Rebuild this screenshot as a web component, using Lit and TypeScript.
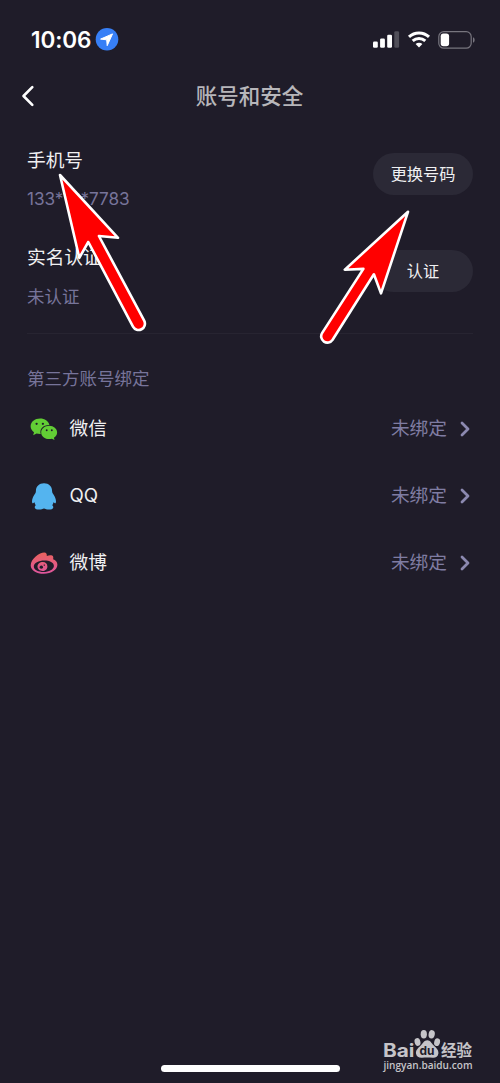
import { LitElement, html, svg, css } from "lit";
import { customElement } from "lit/decorators.js";

const wechat = svg`
  <path fill="#62cd35" d="M10.100 .6C4.900 .6 .6 4 .6 8.300c0 2.400 1.300 4.500 3.400 5.900L3.200 17.200l3.300-1.700c1.200.3 2.400.5 3.600.5h.6C9.300 11 13 6.900 19.400 7 18.500 3.300 14.700 .6 10.100 .6z"/>
  <path fill="#62cd35" d="M19.300 7.700c-4.500 0-8.100 2.900-8.100 6.700s3.600 6.700 8.100 6.700c.9 0 1.800-.1 2.600-.4l2.600 1.300-.6-2.300c1.900-1.200 3.200-3 3.200-5.300 0-3.700-3.500-6.700-7.800-6.700z"/>
  <g fill="#1f1c29"><circle cx="6.600" cy="5.800" r="1.150"/><circle cx="12.900" cy="5.800" r="1.150"/><circle cx="16.700" cy="12.300" r=".95"/><circle cx="21.800" cy="12.300" r=".95"/></g>`;
const qq = svg`
  <path fill="#54b4ef" d="M14 .3C9.100.3 6 3.500 5.900 8c0 .8-.1 1.400-.4 2C3.700 12.400 2 15.600 2 18.200c0 1.500.4 2.300 1.100 2 .5-.2.900-.5 1.400-.9.200 1.100.6 2.100 1.200 3-.7.5-1 1.200-1 2 0 1.600 1.700 2.300 4.300 2.300 2.200 0 3.800-.5 5-1 1.200.5 2.800 1 5 1 2.600 0 4.300-.7 4.300-2.300 0-.8-.3-1.500-1-2 .6-.9 1-1.900 1.200-3 .5.4.9.7 1.400.9.700.3 1.100-.5 1.100-2 0-2.600-1.700-5.800-3.500-8.200-.3-.6-.4-1.200-.4-2C22 3.500 18.900.3 14 .3z"/>`;
const weibo = svg`
  <defs><linearGradient id="wb" gradientUnits="userSpaceOnUse" x1="0" y1="1" x2="0" y2="22"><stop offset="0" stop-color="#e9625e"/><stop offset="1" stop-color="#df559f"/></linearGradient></defs>
  <path fill="url(#wb)" fill-rule="evenodd" d="M14.300 .5C9.500 .6 .7 6.700 .7 13.400c0 4.900 6 8.300 13 8.300 7.600 0 13.700-4.100 13.700-9 0-2.700-1.900-4.500-4.300-5.400.5-1.500.2-3.100-1-3.700-1.500-.8-3.400-.4-5.300.3.200-1.900-.6-3.400-2.500-3.400zM14.300 8.500c-5.600 0-10.500 2.500-10.500 5.900s4.500 5.500 9.800 5.500 10.300-2.600 10.300-6-4.300-5.400-9.600-5.400z"/>
  <path fill="url(#wb)" fill-rule="evenodd" d="M12.900 10c-3 0-5.400 2.100-5.400 4.600s2.200 4.400 5 4.400 4.900-1.900 4.900-4.600S15.500 10 12.900 10zM11.300 13.600a1.800 1.600 0 1 0 .01 0zM14.300 12.500a.7.600 0 1 0 .01 0z"/>`;

@customElement("app-root")
export class AppRoot extends LitElement {
  static styles = css`
    :host {
      display: block; position: relative; height: 1083px; overflow: hidden;
      background: #1f1c29; color: #f0f0f2;
      font-family: Inter, "Noto Sans CJK SC", sans-serif;
      font-size: 18.700px; line-height: 28px;
    }
    svg { display: block; flex: none; overflow: visible; }
    .status { display: flex; align-items: center; height: 79px; padding: 0 25px 0 31px; }
    .time { font-size: 22.500px; font-weight: 600; color: #fff; width: 65px; white-space: nowrap; letter-spacing: -.1px; }
    .grow { flex: 1; }
    .signal { margin-right: 9px; }
    .wifi { margin-right: 8px; }
    .nav { display: grid; grid-template-columns: 60px 1fr 61px; align-items: center; height: 34px; }
    .back { margin-left: 21px; }
    .title { text-align: center; font-size: 21.500px; font-weight: 500; color: #b7b6ba; }
    .account { display: flex; justify-content: space-between; align-items: center; height: 97px; padding: 0 27px; }
    .accounts { padding-top: 19px; height: 220px; box-sizing: border-box; }
    .info { display: flex; flex-direction: column; gap: 11px; }
    .info, .btn { margin-top: -1px; }
    .sub { font-size: 17.500px; color: #77749a; }
    .num { font-size: 17.200px; letter-spacing: -.05px; margin-top: -1px; padding-bottom: 1px; }
    .btn { width: 100px; height: 42.500px; border: 0; border-radius: 22px; background: #2b2936; color: #f0f0f2;
      font: 400 16.200px/42px Inter, "Noto Sans CJK SC", sans-serif; padding: 0; margin-bottom: 12px; }
    .line { height: 1px; margin: 0 27px; background: #272431; }
    .heading { padding: 31px 27px 3px; font-size: 17.500px; color: #77749a; }
    .item { display: flex; align-items: center; height: 66.800px; padding: 0 29px 0 30px; }
    .icon { width: 28px; margin-right: 11.500px; }
    .name { flex: 1; }
    .state { color: #7f7ca2; margin-right: 12px; }
    .home { position: absolute; left: 161px; bottom: 11px; width: 179px; height: 7px; border-radius: 4px; background: #fff; }
    .overlay { position: absolute; left: 0; top: 0; pointer-events: none; }
    .brand { font-family: Inter, sans-serif; font-weight: 700; }
    .cn { font-family: "Noto Sans CJK SC", sans-serif; font-weight: 700; }
    .url { font-family: "Open Sans", sans-serif; font-weight: 600; }
  `;

  private item(icon: unknown, height: number, name: string) {
    return html`<div class="item">
      <svg class="icon" width="28" height=${height} viewBox="0 0 28 ${height}">${icon}</svg>
      <span class="name">${name}</span><span class="state">未绑定</span>
      <svg width="12" height="16" viewBox="0 0 12 16"><path d="M3 2 9 8 3 14" fill="none" stroke="#8c89b0" stroke-width="2.800" stroke-linecap="round" stroke-linejoin="round"/></svg>
    </div>`;
  }

  render() {
    return html`
      <div class="status">
        <span class="time">10:06</span>
        <svg width="23" height="23" viewBox="0 0 23 23"><circle cx="11" cy="11.300" r="11.300" fill="#377ff6"/><path d="M16.500 5.900 4.600 11.100l6.100.7.500 5.900z" fill="#fff" stroke="#fff" stroke-linejoin="round" stroke-width="1"/></svg>
        <span class="grow"></span>
        <svg class="signal" width="26" height="17" viewBox="0 0 26 17"><g fill="#fff"><rect y="10.500" width="4.800" height="6.300" rx="1.300"/><rect x="7.100" y="7.500" width="4.800" height="9.300" rx="1.300"/><rect x="14.200" y="3.800" width="4.800" height="13" rx="1.300"/></g><rect x="21.300" y=".3" width="4.800" height="16.500" rx="1.300" fill="#514f59"/></svg>
        <svg class="wifi" width="22" height="17" viewBox="0 0 22 17"><g fill="none" stroke="#fff" stroke-width="3"><path d="M1 5.900c5.600-5.300 14.400-5.300 20 0"/><path d="M4.700 9.900c3.600-3.300 9-3.300 12.600 0"/></g><path d="M7.600 13c1.900-1.700 4.900-1.700 6.800 0L11 16.600z" fill="#fff"/></svg>
        <svg width="37" height="18" viewBox="0 0 37 18"><rect x=".8" y=".7" width="32.400" height="16.500" rx="5" fill="none" stroke="#77757e" stroke-width="1.200"/><rect x="2.700" y="2.600" width="8.400" height="12.700" rx="2.700" fill="#fff"/><path d="M35 6.200c2.200.8 2.200 4.700 0 5.500z" fill="#77757e"/></svg>
      </div>
      <div class="nav">
        <svg class="back" width="14" height="20" viewBox="0 0 14 20"><path d="M11.300 1.200 2.500 10l8.800 8.800" fill="none" stroke="#fff" stroke-width="2.600" stroke-linecap="round" stroke-linejoin="round"/></svg>
        <span class="title">账号和安全</span>
      </div>
      <div class="accounts">
        <div class="account"><div class="info"><span>手机号</span><span class="sub num">133****7783</span></div><button class="btn">更换号码</button></div>
        <div class="account"><div class="info"><span>实名认证</span><span class="sub">未认证</span></div><button class="btn">认证</button></div>
      </div>
      <div class="line"></div>
      <div class="heading">第三方账号绑定</div>
      ${this.item(wechat, 22, "微信")}${this.item(qq, 27, "QQ")}${this.item(weibo, 22, "微博")}
      <div class="home"></div>
      <svg class="overlay" width="500" height="1083" viewBox="0 0 500 1083">
        <g fill="#f00" stroke="#fff" stroke-width="2.600" stroke-linejoin="round">
          <path d="M60 175 118 237.800 98.900 236 144.200 320.700A6.300 6.300 0 0 1 133 326.600L88.300 242 79.300 257.800Z"/>
          <path d="M408 211.800 344.800 269.700 363.400 268.900 322.200 332.900A6.200 6.200 0 0 0 332.600 339.800L373.900 274.300 381 293.400Z"/>
        </g>
        <g fill="#c5c4c8">
          <text class="brand" x="383" y="1057" font-size="18.500" textLength="31.500" lengthAdjust="spacingAndGlyphs">Bai</text>
          <ellipse cx="417.500" cy="1042" rx="2.900" ry="3.900" transform="rotate(-15 417.500 1042)"/><ellipse cx="423.800" cy="1034.200" rx="3.100" ry="4.200"/>
          <ellipse cx="431.700" cy="1034.300" rx="3.100" ry="4.200" transform="rotate(10 431.700 1034.300)"/><ellipse cx="437.100" cy="1042.200" rx="2.900" ry="3.900" transform="rotate(15 437.100 1042.200)"/>
          <path d="M427.300 1040.200c3 0 4.300 3 6.500 5.400 2.500 2.600 5 4.500 4.600 8-.4 3.300-3 4.400-5.700 4.200-3.700-.3-7-.3-10.700 0-2.900.2-5.600-1-6-4.200-.4-3.500 2.200-5.400 4.700-8 2.200-2.400 3.500-5.400 6.600-5.400z"/>
          <text class="cn" x="441" y="1056" font-size="15.500" textLength="31" lengthAdjust="spacingAndGlyphs">经验</text>
          <text class="url" x="383.500" y="1069.300" font-size="10.500" textLength="89" lengthAdjust="spacingAndGlyphs">jingyan.baidu.com</text>
        </g>
        <text class="brand" x="419.500" y="1055" font-size="12" fill="#1f1c29" textLength="15" lengthAdjust="spacingAndGlyphs">du</text>
      </svg>`;
  }
}
